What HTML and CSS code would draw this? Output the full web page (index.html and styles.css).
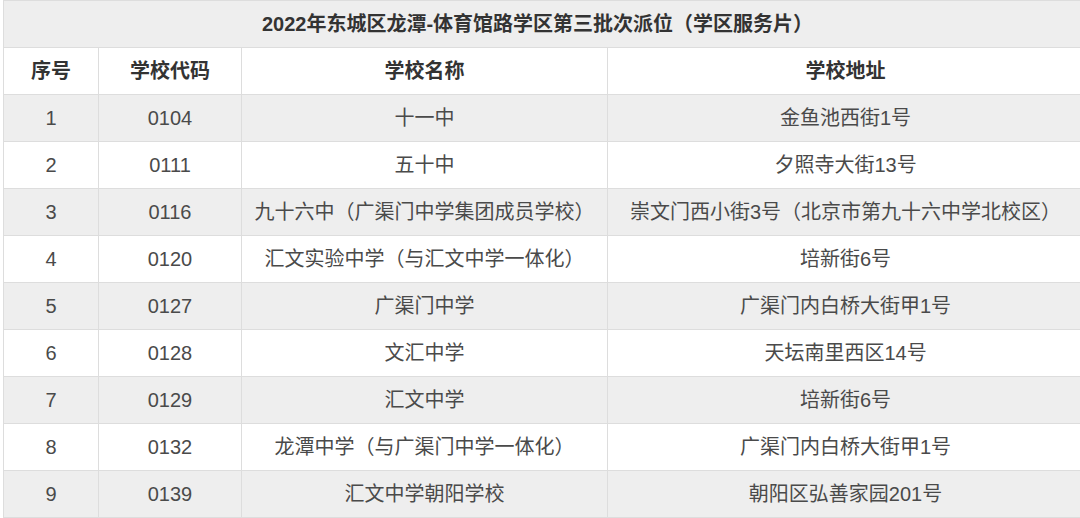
FILE: index.html
```html
<!DOCTYPE html>
<html lang="zh-CN">
<head>
<meta charset="utf-8">
<title>2022年东城区龙潭-体育馆路学区第三批次派位</title>
<link rel="stylesheet" href="styles.css">
</head>
<body>
<div class="wrap">
<table class="tbl">
  <colgroup>
    <col class="c1"><col class="c2"><col class="c3"><col class="c4">
  </colgroup>
  <thead>
    <tr class="title"><th colspan="4">2022年东城区龙潭-体育馆路学区第三批次派位（学区服务片）</th></tr>
    <tr class="head"><th>序号</th><th>学校代码</th><th>学校名称</th><th>学校地址</th></tr>
  </thead>
  <tbody>
    <tr class="odd"><td>1</td><td>0104</td><td>十一中</td><td>金鱼池西街1号</td></tr>
    <tr><td>2</td><td>0111</td><td>五十中</td><td>夕照寺大街13号</td></tr>
    <tr class="odd"><td>3</td><td>0116</td><td>九十六中（广渠门中学集团成员学校）</td><td>崇文门西小街3号（北京市第九十六中学北校区）</td></tr>
    <tr><td>4</td><td>0120</td><td>汇文实验中学（与汇文中学一体化）</td><td>培新街6号</td></tr>
    <tr class="odd"><td>5</td><td>0127</td><td>广渠门中学</td><td>广渠门内白桥大街甲1号</td></tr>
    <tr><td>6</td><td>0128</td><td>文汇中学</td><td>天坛南里西区14号</td></tr>
    <tr class="odd"><td>7</td><td>0129</td><td>汇文中学</td><td>培新街6号</td></tr>
    <tr><td>8</td><td>0132</td><td>龙潭中学（与广渠门中学一体化）</td><td>广渠门内白桥大街甲1号</td></tr>
    <tr class="odd"><td>9</td><td>0139</td><td>汇文中学朝阳学校</td><td>朝阳区弘善家园201号</td></tr>
  </tbody>
</table>
</div>
</body>
</html>
```
FILE: styles.css
```css
html, body {
  margin: 0;
  padding: 0;
  background: #ffffff;
  overflow: hidden;
}
.wrap {
  width: 1080px;
  height: 518px;
  overflow: hidden;
  padding-left: 3px;
  box-sizing: border-box;
}
.tbl {
  border-collapse: collapse;
  table-layout: fixed;
  width: 1080px;
  font-family: "Liberation Sans", "Noto Sans CJK SC", sans-serif;
  font-size: 20px;
  color: #4a4a4a;
}
.c1 { width: 95px; }
.c2 { width: 143px; }
.c3 { width: 366px; }
.c4 { width: 476px; }
.tbl th, .tbl td {
  border: 1px solid #dddddd;
  height: 47px;
  padding: 0 6px;
  box-sizing: border-box;
  text-align: center;
  vertical-align: middle;
  white-space: nowrap;
  line-height: 24px;
}
.tbl th {
  font-weight: bold;
  color: #333333;
}
.title th {
  background: #eeeeee;
  padding-right: 18px;
}
.head th {
  background: #ffffff;
}
.odd td {
  background: #eeeeee;
}
```
